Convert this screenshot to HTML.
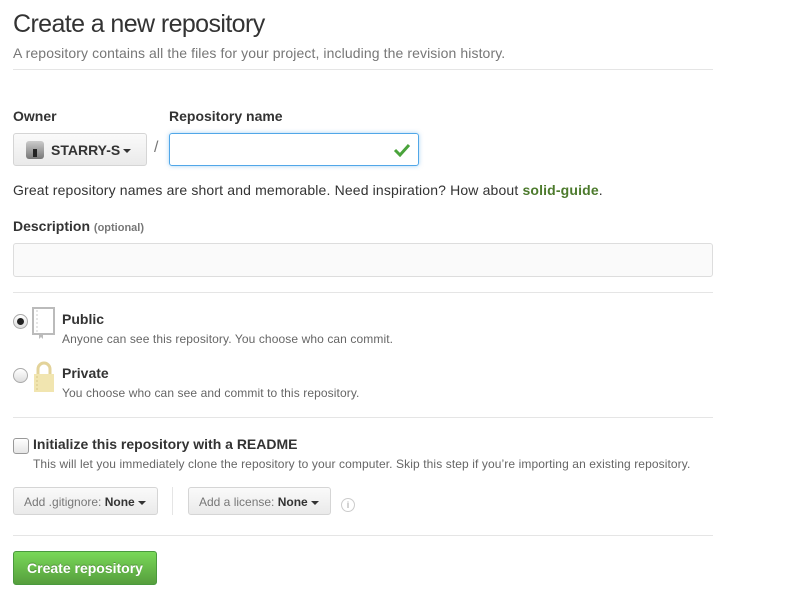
<!DOCTYPE html>
<html><head><meta charset="utf-8"><style>
*{box-sizing:border-box;margin:0;padding:0}
body{width:794px;height:595px;background:#fff;font-family:"Liberation Sans",Arial,sans-serif;color:#333;position:relative;overflow:hidden}
.a{position:absolute;white-space:nowrap}
.hr{position:absolute;left:13px;width:700px;height:1px;background:#e5e5e5}
.btn{position:absolute;border:1px solid #d5d5d5;border-radius:3px;background:linear-gradient(#fafafa,#eaeaea)}
.caret{display:inline-block;width:0;height:0;border-left:4px solid transparent;border-right:4px solid transparent;border-top:4px solid #333;vertical-align:middle;margin-left:3px}
</style></head><body>
<div class="a" style="left:13px;top:10px;font-size:25px;letter-spacing:-0.6px;color:#333">Create a new repository</div>
<div class="a" style="left:13px;top:45px;font-size:14px;color:#777;letter-spacing:0.1px">A repository contains all the files for your project, including the revision history.</div>
<div class="hr" style="top:69px"></div>

<div class="a" style="left:13px;top:108px;font-size:14px;font-weight:bold">Owner</div>
<div class="a" style="left:169px;top:108px;font-size:14px;font-weight:bold">Repository name</div>
<div class="btn" style="left:13px;top:133px;width:134px;height:33px">
 <div class="a" style="left:12px;top:7px;width:18px;height:18px;border-radius:3px;background:linear-gradient(#ccc,#777)"><div style="position:absolute;left:7px;top:8px;width:4px;height:8px;background:#222"></div></div>
 <div class="a" style="left:37px;top:8px;font-size:14px;font-weight:bold">STARRY-S<span class="caret"></span></div>
</div>
<div class="a" style="left:154px;top:139px;font-size:16px;color:#777">/</div>
<div class="a" style="left:169px;top:133px;width:250px;height:33px;border:1px solid #51a7e8;border-radius:3px;box-shadow:0 0 4px rgba(81,167,232,.5)">
 <svg class="a" style="left:223px;top:9px" width="18" height="14" viewBox="0 0 18 14"><path d="M2 7l5 5L16 2" stroke="#4aa33b" stroke-width="3" fill="none"/></svg>
</div>
<div class="a" style="left:13px;top:182px;font-size:14px;letter-spacing:0.15px">Great repository names are short and memorable. Need inspiration? How about <b style="color:#4c7a2c">solid-guide</b>.</div>

<div class="a" style="left:13px;top:218px;font-size:14px;font-weight:bold">Description <span style="font-size:11px;color:#777">(optional)</span></div>
<div class="a" style="left:13px;top:243px;width:700px;height:34px;border:1px solid #ddd;border-radius:3px;background:#fafafa"></div>
<div class="hr" style="top:292px"></div>

<div class="a" style="left:13px;top:314px;width:15px;height:15px;border-radius:50%;border:1px solid #aaa;background:linear-gradient(#fff,#ddd)"><div style="position:absolute;left:3px;top:3px;width:7px;height:7px;border-radius:50%;background:#222"></div></div>
<svg class="a" style="left:32px;top:307px" width="24" height="32" viewBox="0 0 24 32"><rect x="1" y="1" width="21" height="26" fill="none" stroke="#bbb" stroke-width="2"/><path d="M5 3v22" stroke="#ccc" stroke-dasharray="2 2"/><path d="M7 27v5l2-2 2 2v-5" fill="#bbb"/></svg>
<div class="a" style="left:62px;top:311px;font-size:14px;font-weight:bold">Public</div>
<div class="a" style="left:62px;top:332px;font-size:12px;color:#666;letter-spacing:0.1px">Anyone can see this repository. You choose who can commit.</div>

<div class="a" style="left:13px;top:368px;width:15px;height:15px;border-radius:50%;border:1px solid #aaa;background:linear-gradient(#fff,#ddd)"></div>
<svg class="a" style="left:32px;top:361px" width="24" height="32" viewBox="0 0 24 32"><path d="M6 13V8a6 6 0 0 1 12 0v5" fill="none" stroke="#e3d39a" stroke-width="3"/><rect x="2" y="13" width="20" height="18" fill="#f1e5b0"/><path d="M5 15v14" stroke="#d8c888" stroke-dasharray="2 2"/></svg>
<div class="a" style="left:62px;top:365px;font-size:14px;font-weight:bold">Private</div>
<div class="a" style="left:62px;top:386px;font-size:12px;color:#666;letter-spacing:0.1px">You choose who can see and commit to this repository.</div>
<div class="hr" style="top:417px"></div>

<div class="a" style="left:13px;top:438px;width:16px;height:16px;border-radius:3px;border:1px solid #999;background:linear-gradient(#fff,#e5e5e5)"></div>
<div class="a" style="left:33px;top:436px;font-size:14px;font-weight:bold">Initialize this repository with a README</div>
<div class="a" style="left:33px;top:457px;font-size:12px;color:#666;letter-spacing:0.1px">This will let you immediately clone the repository to your computer. Skip this step if you’re importing an existing repository.</div>

<div class="btn" style="left:13px;top:487px;width:145px;height:28px"><div class="a" style="left:10px;top:7px;font-size:12px;color:#777">Add .gitignore: <b style="color:#333">None</b><span class="caret"></span></div></div>
<div class="a" style="left:172px;top:487px;width:1px;height:28px;background:#e5e5e5"></div>
<div class="btn" style="left:188px;top:487px;width:143px;height:28px"><div class="a" style="left:10px;top:7px;font-size:12px;color:#777">Add a license: <b style="color:#333">None</b><span class="caret"></span></div></div>
<div class="a" style="left:341px;top:498px;width:14px;height:14px;border-radius:50%;border:1px solid #ccc;font-size:9px;color:#bbb;text-align:center;line-height:12px;font-weight:bold">i</div>
<div class="hr" style="top:535px"></div>

<div class="a" style="left:13px;top:551px;width:144px;height:34px;border:1px solid #4a993e;border-radius:3px;background:linear-gradient(#79d858,#569e3d);color:#fff;font-size:14px;font-weight:bold;text-align:center;line-height:32px;text-shadow:0 -1px 0 rgba(0,0,0,.25)">Create repository</div>
</body></html>
